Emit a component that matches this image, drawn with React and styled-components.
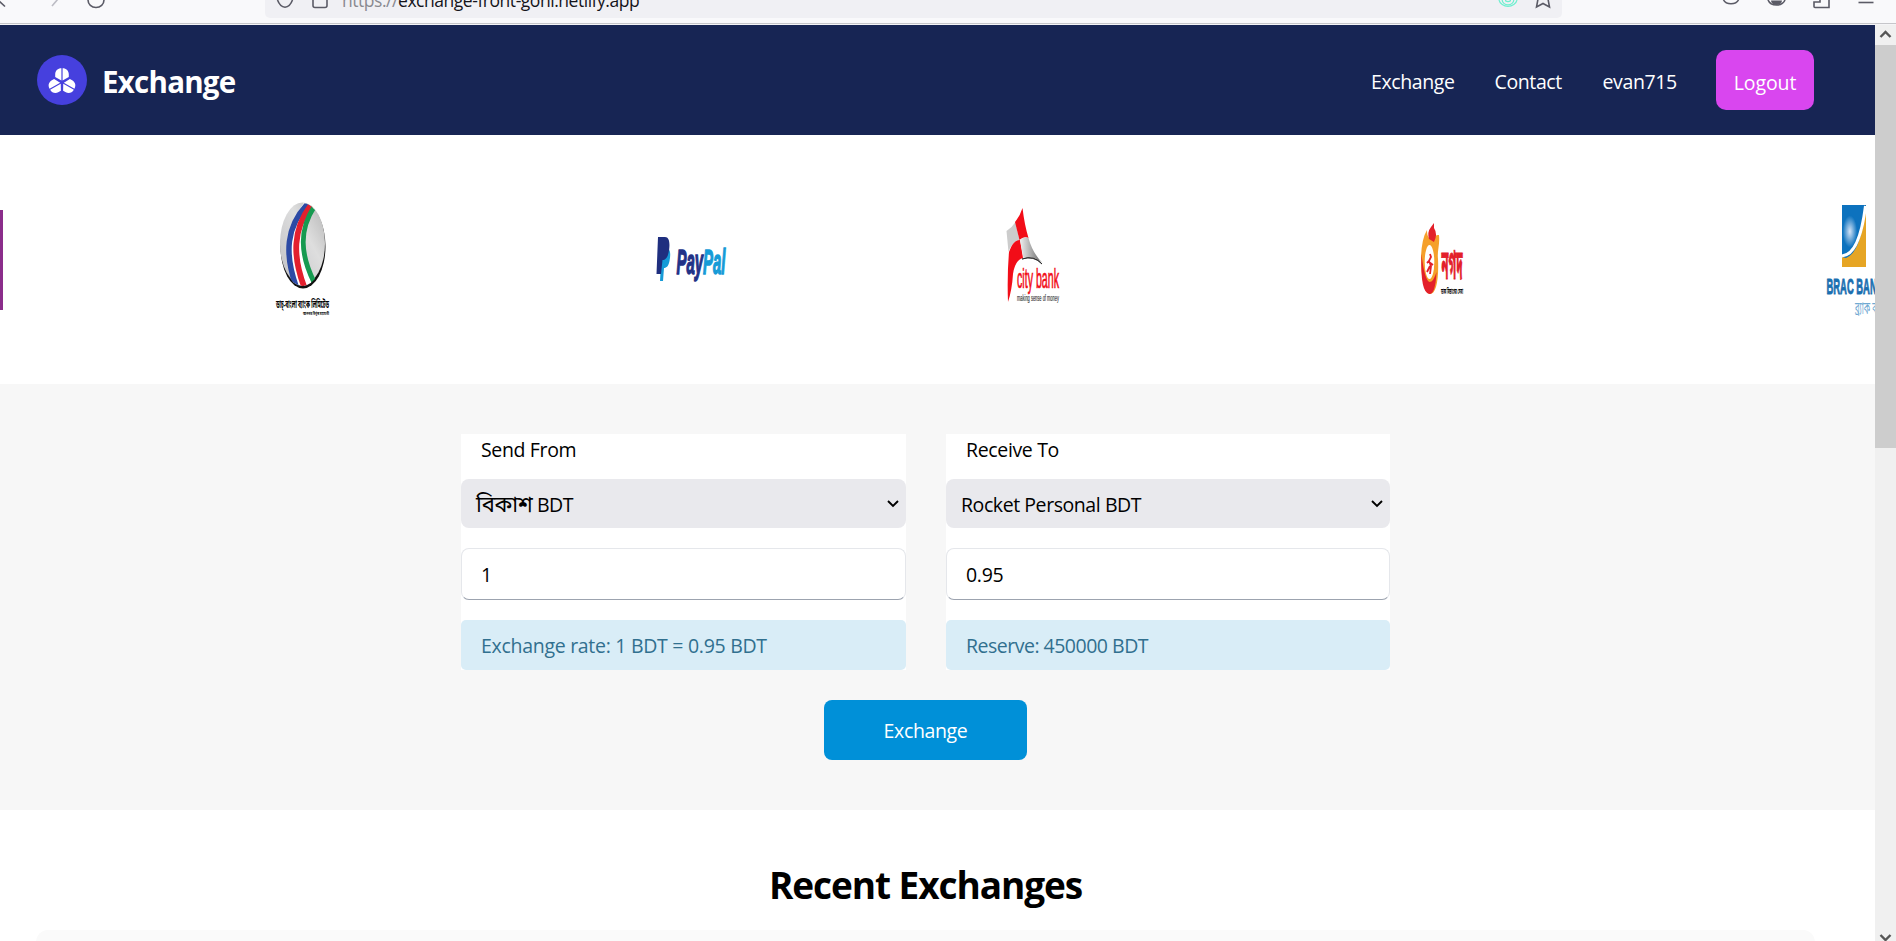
import React from "react";
import styled, { createGlobalStyle } from "styled-components";

const GlobalStyle = createGlobalStyle`
  * { box-sizing: border-box; }
  html, body { margin: 0; height: 941px; overflow: hidden; background: #fff; }
  body, button, input, select { font-family: "Open Sans", "Noto Sans", "Noto Sans Bengali", sans-serif; }
  svg { display: block; }
`;

const Window = styled.div`
  display: flex;
  flex-direction: column;
  width: 1896px;
  height: 941px;
  overflow: hidden;
`;

const Toolbar = styled.div`
  display: flex;
  align-items: flex-start;
  height: 25px;
  flex: none;
  background: #f9f9fb;
  border-bottom: 1px solid #f5f5f7;
  box-shadow: inset 0 -1px 0 #c6c6ca;
`;

const ToolGroup = styled.div`
  width: ${(p) => p.$w}px;
  height: 24px;
`;

const AddressBar = styled.div`
  display: flex;
  align-items: flex-start;
  width: 1297px;
  height: 18px;
  background: #f0f0f4;
  border-radius: 0 0 5px 5px;
  overflow: hidden;
`;

const Url = styled.div`
  flex: 1;
  margin-top: -12px;
  font-size: 17.5px;
  line-height: 24px;
  letter-spacing: -0.46px;
  white-space: nowrap;
  color: #15141a;
  span { color: #8a8a90; }
`;

const Viewport = styled.div`
  display: flex;
  flex: 1;
  min-height: 0;
`;

const Page = styled.div`
  width: 1875px;
  overflow: hidden;
  background: #fff;
`;

const Scrollbar = styled.div`
  display: flex;
  flex-direction: column;
  justify-content: space-between;
  width: 21px;
  background: #f0f0f0;
`;

const Thumb = styled.div`
  height: 403px;
  margin-bottom: auto;
  background: #cdcdcd;
`;

const Header = styled.header`
  display: flex;
  align-items: center;
  justify-content: space-between;
  height: 110px;
  padding: 0 61px 0 37px;
  background: #172554;
`;

const Brand = styled.div`
  display: flex;
  align-items: center;
  gap: 15px;
`;

const BrandName = styled.span`
  margin-top: 3px;
  color: #fff;
  font-size: 29.5px;
  font-weight: 700;
  line-height: 40px;
  letter-spacing: -0.75px;
`;

const Nav = styled.nav`
  display: flex;
  align-items: center;
  gap: 40px;
`;

const NavLink = styled.a`
  width: ${(p) => p.$w}px;
  margin-top: 4px;
  color: #fff;
  font-size: 19.5px;
  line-height: 30px;
  white-space: nowrap;
  letter-spacing: -0.38px;
`;

const Logout = styled.button`
  width: 98px;
  height: 60px;
  padding: 4px 0 0;
  border: 0;
  border-radius: 10px;
  background: #d946ef;
  color: #fff;
  font-size: 19.5px;
  letter-spacing: -0.1px;
`;

const Strip = styled.section`
  display: flex;
  height: 249px;
  padding-top: 60px;
  overflow: hidden;
`;

const Slide = styled.div`
  flex: none;
  width: ${(p) => p.$w}px;
  height: 130px;
`;

const ExchangeSection = styled.section`
  display: flex;
  flex-direction: column;
  align-items: center;
  height: 426px;
  padding: 50px 24px 0 0;
  background: #f7f7f7;
`;

const Panels = styled.div`
  display: grid;
  grid-template-columns: 445px 444px;
  gap: 40px;
`;

const Panel = styled.div`
  display: flex;
  flex-direction: column;
  height: 236px;
  background: #fff;
`;

const Label = styled.label`
  height: 45px;
  padding: 1px 20px 0;
  font-size: 19.5px;
  line-height: 30px;
  letter-spacing: -0.35px;
`;

const Select = styled.div`
  display: flex;
  align-items: center;
  justify-content: space-between;
  height: 49px;
  padding: 0 6px 0 15px;
  border-radius: 8px;
  background: #e9e9ed;
  font-size: 19.5px;
  letter-spacing: -0.43px;
`;

const Choice = styled.span`
  height: 30px;
  margin-top: 3px;
  line-height: 30px;
`;

const BengaliName = styled.span`
  font-size: 22px;
  line-height: 1px;
`;

const Amount = styled.input`
  height: 52px;
  margin: 20px 0;
  padding: 1px 19px 0;
  border: 1px solid #e5e7eb;
  border-bottom-color: #9ca3af;
  border-radius: 8px;
  background: #fff;
  color: #000;
  font-size: 19.5px;
  letter-spacing: -0.3px;
  outline: 0;
`;

const Notice = styled.div`
  height: 50px;
  padding: 2px 20px 0;
  border-radius: 5px;
  background: #d9edf7;
  color: #31708f;
  font-size: 19.5px;
  line-height: 48px;
  letter-spacing: ${(p) => p.$track}px;
`;

const Submit = styled.button`
  width: 203px;
  height: 60px;
  margin-top: 30px;
  padding: 1px 0 0;
  border: 0;
  border-radius: 8px;
  background: #0090d8;
  color: #fff;
  font-size: 19.5px;
  letter-spacing: -0.35px;
`;

const Recent = styled.section`
  display: flex;
  flex-direction: column;
  padding: 50px 60px 0 36px;
`;

const RecentTitle = styled.h2`
  margin: 0 0 20px;
  color: #000;
  font-size: 37px;
  font-weight: 700;
  line-height: 50px;
  letter-spacing: -1.08px;
  text-align: center;
`;

const RecentCard = styled.div`
  height: 60px;
  border-radius: 12px;
  background: #fafafa;
`;

const stroke = { fill: "none", stroke: "#5b5b66", strokeWidth: 1.6 };

const NavigationIcons = () => (
  <svg width="265" height="24" {...stroke}>
    <path d="M-2 0 5 6.5" />
    <path d="M58-1 52 6" stroke="#bcbcc4" />
    <path d="M88 0a8 7.500 0 0 0 16 0" />
  </svg>
);

const AddressIcons = () => (
  <svg width="77" height="18" {...stroke}>
    <path d="M12.500 0C14 4 17 7 20 7.300 23 7 26 4 27.500 0" />
    <path d="M48 0v5.500a2 2 0 0 0 2 2h10a2 2 0 0 0 2-2V0" />
  </svg>
);

const BookmarkIcons = () => (
  <svg width="74" height="18" {...stroke}>
    <g stroke="#6fefcf" strokeWidth="1.200">
      <path d="M11 0a9.200 8 0 0 0 18 0" />
      <path d="M14.200 0a5.800 4.800 0 0 0 11.600 0" />
      <path d="M17.500 0a2.500 1.600 0 0 0 5 0" />
    </g>
    <path d="M50-1 48.500 7 55 3.500 61.500 7 60-1" />
  </svg>
);

const ToolIcons = () => (
  <svg width="334" height="24" {...stroke}>
    <path d="M161.500 0a8 5.800 0 0 0 15 0" />
    <path d="M206 0a9 7.500 0 0 0 17 0" />
    <path d="M209 0.500a5.500 4.500 0 0 0 11 0z" fill="#5b5b66" stroke="none" />
    <path d="M258-1v3h-6v4.500a1 1 0 0 0 1 1h14V-1" />
    <path d="M296.500 2.500h15" />
  </svg>
);

const BrandMark = () => (
  <svg width="50" height="50" viewBox="0 0 50 50">
    <circle cx="25" cy="25" r="25" fill="#4640de" />
    <g fill="#fff">
      {[0, 120, 240].map((a) => (
        <g key={a} transform={`rotate(${a} 25 27.300)`}>
          <path d="M24.400 13.300v12.200l-6.200-3.400V19.500c0-3.700 2.500-6.200 6.200-6.200z" />
          <path d="M25.600 13.300v12.200l6.200-3.400V19.500c0-3.700-2.500-6.200-6.200-6.200z" />
        </g>
      ))}
    </g>
  </svg>
);

const Chevron = () => (
  <svg width="14" height="10" viewBox="0 0 14 10">
    <path d="M2 2l5 5 5-5" fill="none" stroke="#000" strokeWidth="1.900" />
  </svg>
);

const ScrollArrow = ({ down }) => (
  <svg width="21" height={down ? 9 : 20} viewBox={down ? "0 0 21 9" : "0 0 21 20"}>
    <path d={down ? "M5.500 3l5 5 5-5" : "M5.500 12l5-5 5 5"} fill="none" stroke="#555" strokeWidth="2.400" />
  </svg>
);

const PreviousLogo = () => (
  <svg width="270" height="130" viewBox="0 195 270 130">
    <path d="M0 210h3v100H0z" fill="#8b2d8b" />
  </svg>
);

const DutchBanglaLogo = () => (
  <svg width="380" height="130" viewBox="270 195 380 130">
    <defs>
      <linearGradient id="silver" x1="1" y1="0" x2="0" y2="1">
        <stop offset="0" stopColor="#b4b4b4" />
        <stop offset=".4" stopColor="#dedede" />
        <stop offset="1" stopColor="#c0c0c4" />
      </linearGradient>
      <clipPath id="oval"><ellipse cx="302.500" cy="244.500" rx="22.500" ry="41.500" /></clipPath>
    </defs>
    <ellipse cx="303" cy="246.500" rx="22.500" ry="42" fill="#111" />
    <ellipse cx="302.500" cy="243.500" rx="22.500" ry="41" fill="url(#silver)" />
    <g fill="none" clipPath="url(#oval)">
      <path d="M308 204C289 229 288 252 299 290" stroke="#fff" strokeWidth="8" />
      <path d="M312 206C294 232 296 254 309 288" stroke="#fff" strokeWidth="8" />
      <path d="M308.500 203C286 226 284 254 297 289" stroke="#2c4aa5" strokeWidth="5.500" />
      <path d="M311 205C293 229 292 256 305 289" stroke="#e3202e" strokeWidth="5.800" />
      <path d="M314 207C299 230 300 254 314 282" stroke="#169a50" strokeWidth="5" />
    </g>
    <text x="276" y="308" fontSize="11" fontWeight="700" textLength="53" lengthAdjust="spacingAndGlyphs">ডাচ্-বাংলা ব্যাংক লিমিটেড</text>
    <text x="303" y="315" fontSize="5" fontWeight="700" textLength="26" lengthAdjust="spacingAndGlyphs">আপনার বিশ্বস্ত সহযোগী</text>
  </svg>
);

const PayPalLogo = () => (
  <svg width="350" height="130" viewBox="650 195 350 130">
    <path d="M660 281l1-17 1-15h6.500c2.200 2 2 7 1 12-1 5-3 7-5.500 7l-1 13z" fill="#169bd7" />
    <path d="M656.500 274l1.500-37h7c4 0 5 5 4.200 12-1 8-3.200 11-6.700 11l-1.500 14z" fill="#1f2f7f" />
    <g transform="translate(676.500 274) scale(1 1.850)" fontFamily="Liberation Sans" fontStyle="italic" fontWeight="700" fontSize="19" strokeWidth=".8">
      <text fill="#223287" stroke="#223287" textLength="49" lengthAdjust="spacingAndGlyphs">
        Pay<tspan fill="#169bd7" stroke="#169bd7">Pal</tspan>
      </text>
    </g>
  </svg>
);

const CityBankLogo = () => (
  <svg width="410" height="130" viewBox="1000 195 410 130">
    <defs>
      <linearGradient id="steel"><stop offset="0" stopColor="#eee" /><stop offset="1" stopColor="#666" /></linearGradient>
    </defs>
    <path d="M1006.500 231q6-4 9-9l4 18q-7 1-11 12z" fill="#ccc" />
    <path d="M1015 222q5-6 7.500-14 2 17 6 30-5-2-9 2z" fill="#f20d18" />
    <path d="M1009 252q4-12 11-12l3 18q-8 2-10 16-1 16-5 28-1-26 1-50z" fill="#f20d18" />
    <path d="M1020 240q4-4 8.500-2 4 15 14 25-8-7-19-5z" fill="url(#steel)" />
    <path d="M1022 259q13-4 20 5-9-9-20-5z" fill="#222" stroke="#222" strokeWidth=".8" />
    <g fontFamily="Liberation Sans Narrow, Liberation Sans">
      <text transform="translate(1017 288) scale(1 1.850)" fontSize="15" fill="#f20d18" stroke="#f20d18" strokeWidth=".4" textLength="42" lengthAdjust="spacingAndGlyphs">city bank</text>
      <text x="1017" y="301" fontSize="9" fill="#444" stroke="#444" strokeWidth=".2" textLength="42" lengthAdjust="spacingAndGlyphs">making sense of money</text>
    </g>
  </svg>
);

const NagadLogo = () => (
  <svg width="405" height="130" viewBox="1410 195 405 130">
    <path d="M1427 230q-5 8-6 26c0 25 4 38 9 38 6 0 9-14 8-35-1-8 2-14 1-24-5-1-4 5-7 5-3-2-5-3-5-10z" fill="#f5a02b" />
    <path d="M1429 239q-2-7 2-12l3-4v5q4 6 0 14z" fill="#e3202a" />
    <path d="M1421.500 254q-1.500 39 8 40 6 0 7-22-3 10-7 10-5-2-8-28z" fill="#e3202a" />
    <ellipse cx="1429.500" cy="262" rx="4.800" ry="17" fill="#fff" />
    <path d="M1430 254l1 3-2 4-2 2m2-2 2 5-1 8m0-8-3 6m2-10 4 3" fill="none" stroke="#e3202a" strokeWidth="1.800" />
    <text transform="translate(1441.500 279) scale(1 2.300)" fontSize="18" fontWeight="700" fill="#e3202a" stroke="#e3202a" strokeWidth=".4" textLength="21" lengthAdjust="spacingAndGlyphs">নগদ</text>
    <text x="1441" y="294" fontSize="7" fontWeight="700" textLength="22" lengthAdjust="spacingAndGlyphs">ডাক বিভাগের সেবা</text>
  </svg>
);

const BracBankLogo = () => (
  <svg width="60" height="130" viewBox="1815 195 60 130">
    <defs>
      <radialGradient id="glow" cx=".33" cy=".5" r=".3"><stop offset="0" stopColor="#d5e4f7" /><stop offset="1" stopColor="#0d72be" /></radialGradient>
    </defs>
    <path d="M1842 205h24v62h-24z" fill="#e6a524" />
    <path d="M1842 205h24q-5 48-20 53l-4-1z" fill="url(#glow)" />
    <path d="M1842 256c13-1 20-22 23.500-50" fill="none" stroke="#fff" strokeWidth="3" />
    <g transform="translate(1826.500 294) scale(1 1.350)" fontFamily="Liberation Sans" fontWeight="700" fontSize="17" fill="#1a6fb0" stroke="#1a6fb0" strokeWidth=".7">
      <text textLength="57" lengthAdjust="spacingAndGlyphs">BRAC BANK</text>
    </g>
    <text transform="translate(1855 314) scale(1 1.300)" fontSize="13" fill="#6fa9d2" textLength="36" lengthAdjust="spacingAndGlyphs">ব্র্যাক ব্যাংক</text>
  </svg>
);

const slides = [
  [270, PreviousLogo],
  [380, DutchBanglaLogo],
  [350, PayPalLogo],
  [410, CityBankLogo],
  [405, NagadLogo],
  [60, BracBankLogo],
];

export default function App() {
  return (
    <Window>
      <GlobalStyle />
      <Toolbar>
        <ToolGroup $w={265}><NavigationIcons /></ToolGroup>
        <AddressBar>
          <AddressIcons />
          <Url><span>https://</span>exchange-front-gohi.netlify.app</Url>
          <BookmarkIcons />
        </AddressBar>
        <ToolGroup $w={334}><ToolIcons /></ToolGroup>
      </Toolbar>
      <Viewport>
        <Page>
          <Header>
            <Brand>
              <BrandMark />
              <BrandName>Exchange</BrandName>
            </Brand>
            <Nav>
              <NavLink $w={83.5}>Exchange</NavLink>
              <NavLink $w={68}>Contact</NavLink>
              <NavLink $w={73.5}>evan715</NavLink>
              <Logout>Logout</Logout>
            </Nav>
          </Header>
          <Strip>
            {slides.map(([w, Logo]) => (
              <Slide key={w} $w={w}><Logo /></Slide>
            ))}
          </Strip>
          <ExchangeSection>
            <Panels>
              <Panel>
                <Label>Send From</Label>
                <Select><Choice><BengaliName>বিকাশ</BengaliName> BDT</Choice><Chevron /></Select>
                <Amount defaultValue="1" />
                <Notice $track={-0.29}>Exchange rate: 1 BDT = 0.95 BDT</Notice>
              </Panel>
              <Panel>
                <Label>Receive To</Label>
                <Select><Choice>Rocket Personal BDT</Choice><Chevron /></Select>
                <Amount defaultValue="0.95" />
                <Notice $track={-0.5}>Reserve: 450000 BDT</Notice>
              </Panel>
            </Panels>
            <Submit>Exchange</Submit>
          </ExchangeSection>
          <Recent>
            <RecentTitle>Recent Exchanges</RecentTitle>
            <RecentCard />
          </Recent>
        </Page>
        <Scrollbar>
          <ScrollArrow />
          <Thumb />
          <ScrollArrow down />
        </Scrollbar>
      </Viewport>
    </Window>
  );
}
